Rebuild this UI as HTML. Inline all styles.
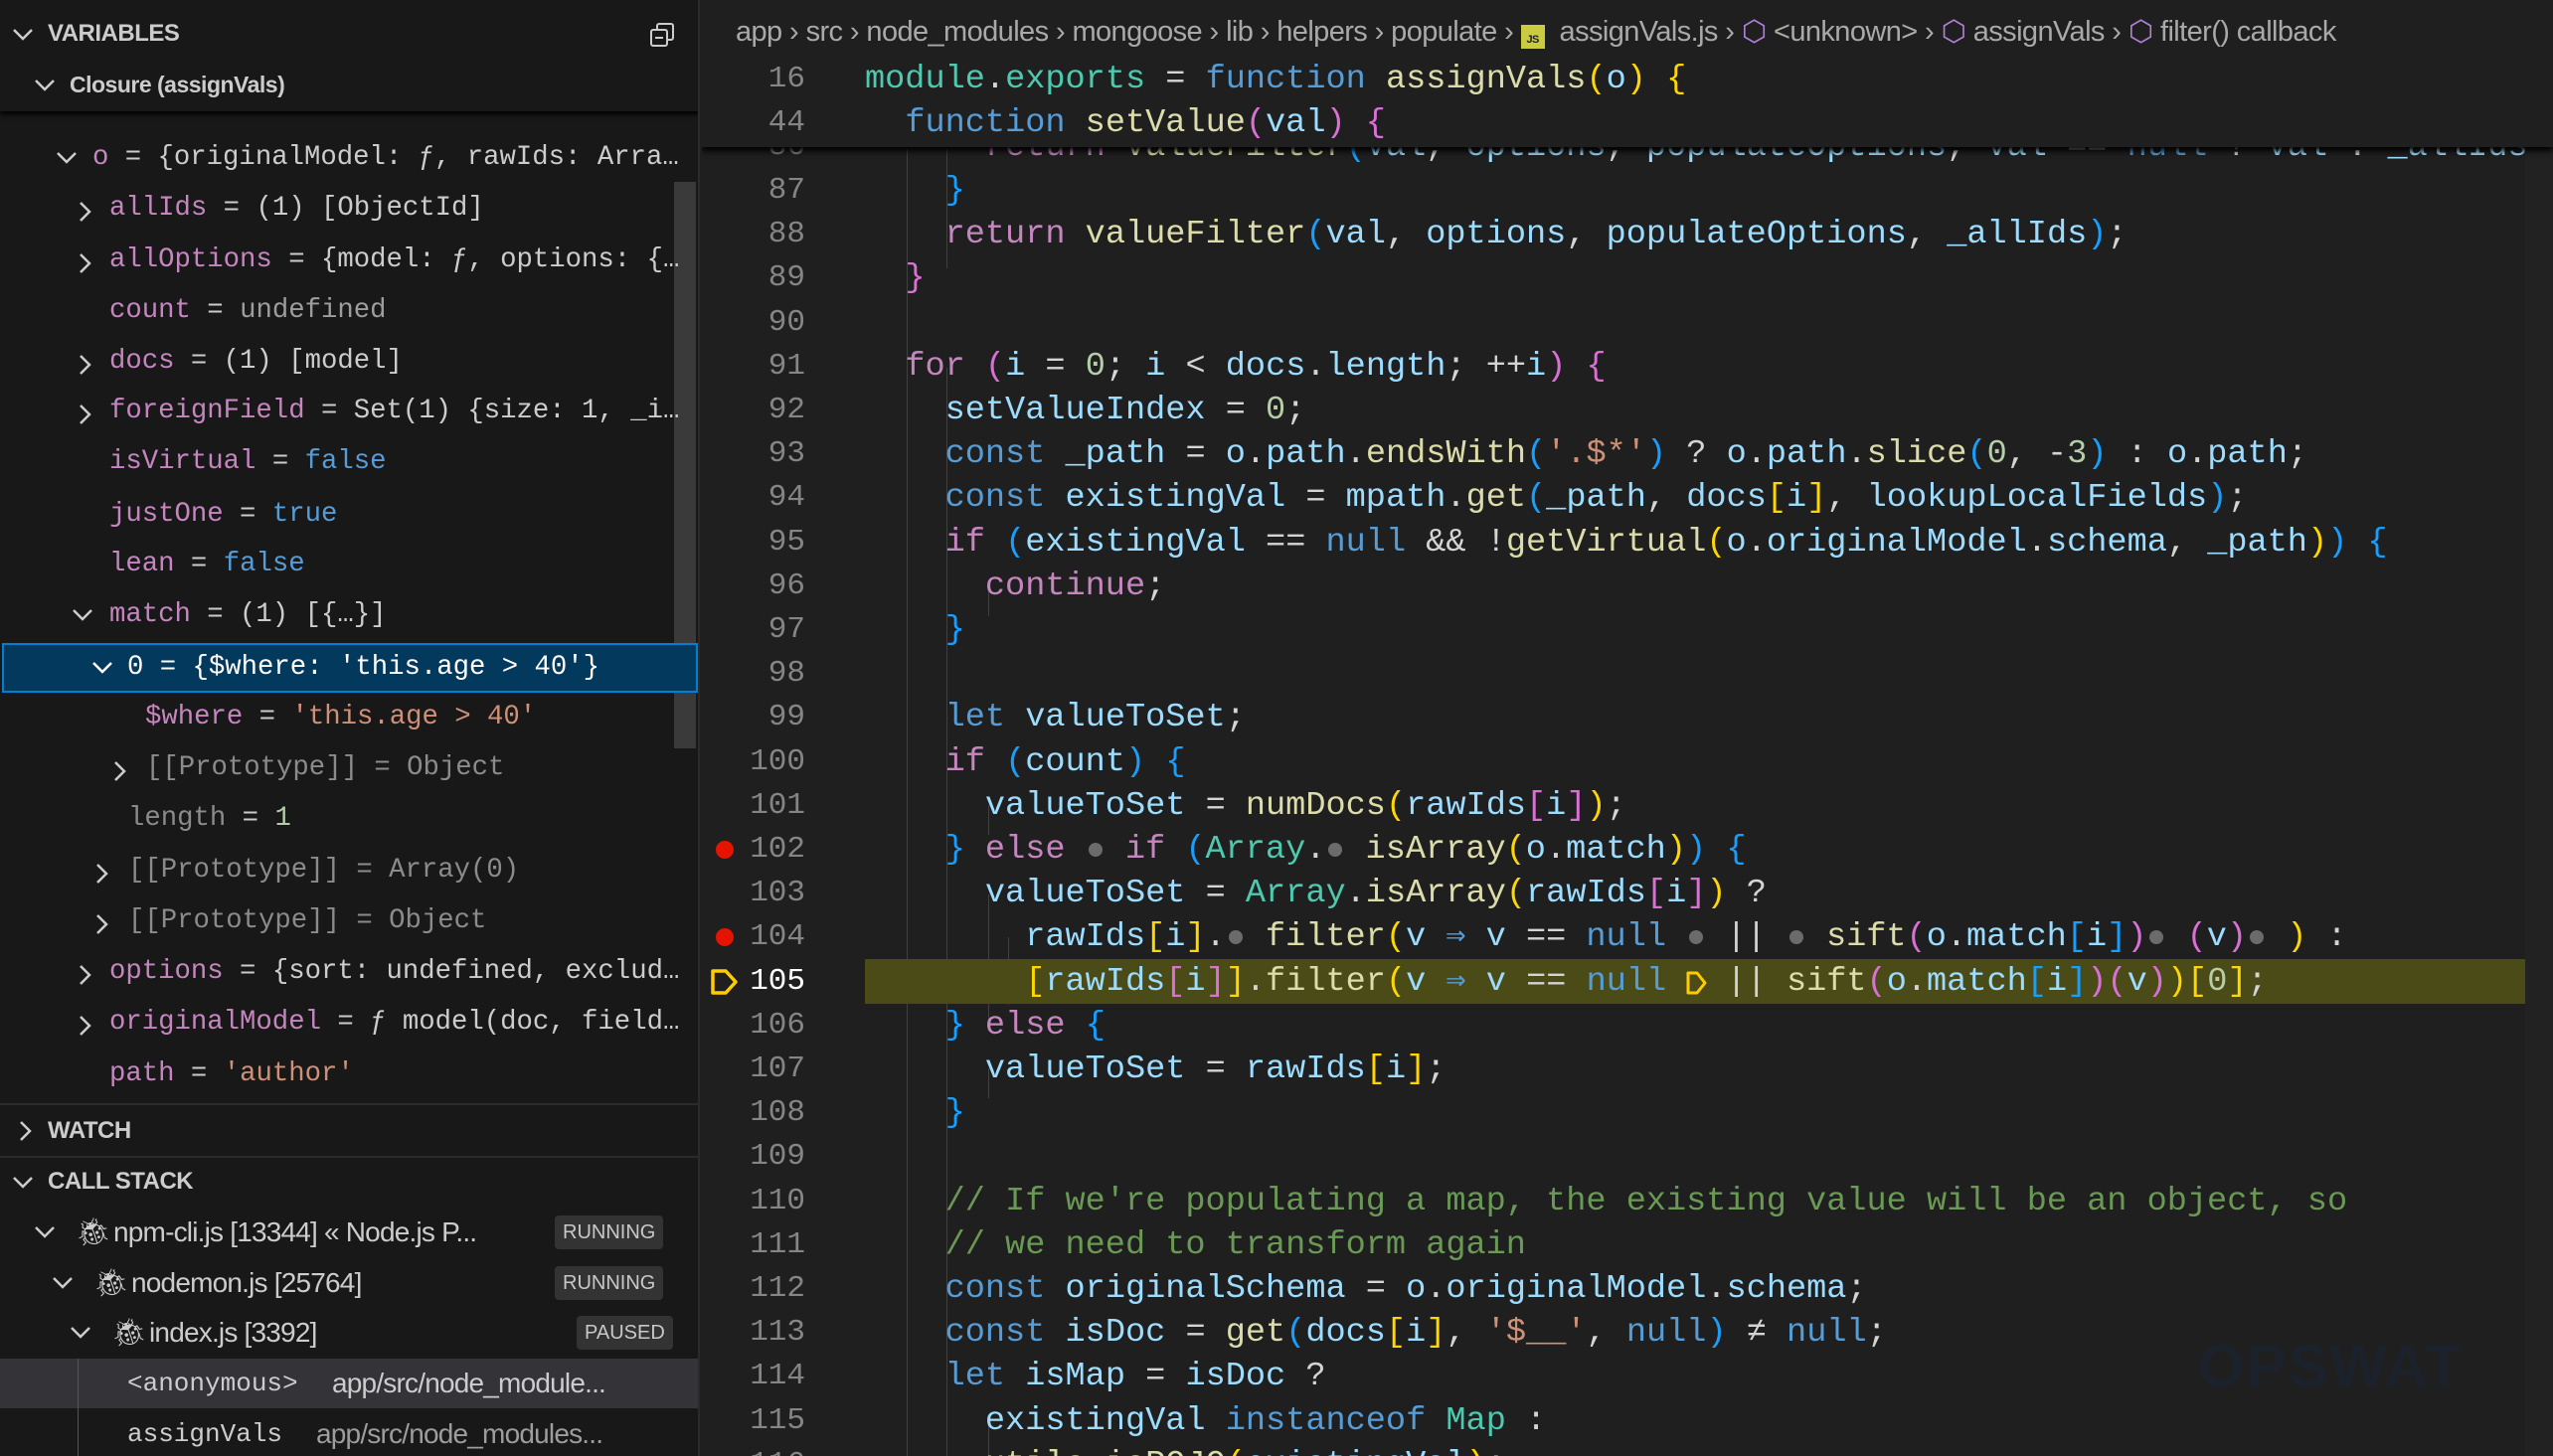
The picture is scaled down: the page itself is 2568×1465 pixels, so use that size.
<!DOCTYPE html>
<html><head><meta charset="utf-8"><style>
*{margin:0;padding:0;box-sizing:border-box}
body{width:2568px;height:1465px;overflow:hidden;background:#1f1f1f;position:relative;font-family:"Liberation Sans",sans-serif}
#left{position:absolute;left:0;top:0;width:704px;height:1465px;background:#181818;overflow:hidden;border-right:2px solid #2b2b2b}
.row{position:absolute;left:0;width:704px;height:50px;line-height:50px;font-family:"Liberation Mono",monospace;font-size:27.3px;color:#cccccc;white-space:pre}
.hdr{position:absolute;left:0;width:704px;height:50px;line-height:50px;font-size:24px;font-weight:bold;color:#cccccc;letter-spacing:-0.5px}
.nm{color:#c586c0}.dim{color:#8b8b8b}.str{color:#ce9178}.num{color:#b5cea8}.bl{color:#569cd6}.gr{color:#9d9d9d}
.chev{position:absolute;top:17px}
.sans{font-family:"Liberation Sans",sans-serif;font-size:28px}
.badge{position:absolute;height:34px;line-height:34px;background:#333;color:#c8c8c8;font-size:20px;border-radius:4px;padding:0 8px;font-family:"Liberation Sans",sans-serif;top:8px}
#ed{position:absolute;left:706px;top:0;width:1862px;height:1465px;background:#1f1f1f;overflow:hidden}
.ln{position:absolute;left:0;width:104px;text-align:right;font-family:"Liberation Mono",monospace;font-size:31px;color:#858585;height:44px;line-height:44px}
.cl{position:absolute;left:164px;font-family:"Liberation Mono",monospace;font-size:33.6px;color:#d4d4d4;white-space:pre;height:44px;line-height:44px}
.k{color:#569cd6}.c{color:#c586c0}.f{color:#dcdcaa}.v{color:#9cdcfe}.t{color:#4ec9b0}.s{color:#ce9178}.n{color:#b5cea8}.cm{color:#6a9955}
.b1{color:#ffd700}.b2{color:#da70d6}.b3{color:#179fff}
.dot{display:inline-block;width:20px;height:44px;position:relative;vertical-align:top}
.dot:after{content:"";position:absolute;left:3px;top:15px;width:14px;height:14px;border-radius:50%;background:#6b6b6b}
.bp{position:absolute;left:14px;width:18px;height:18px;border-radius:50%;background:#e51400}
.crumb{position:absolute;top:14px;left:34px;font-size:29px;color:#a9a9a9;white-space:pre;letter-spacing:-0.6px}
.g{position:absolute;width:1px;background:#404040}
</style></head><body>

<div id="ed">
  <div class="g" style="left:206px;top:150px;height:1315px"></div>
  <div class="g" style="left:246px;top:150px;height:120px"></div>
  <div class="g" style="left:246px;top:370px;height:1095px"></div>
  <div class="g" style="left:288px;top:590px;height:30px"></div>
  <div class="g" style="left:288px;top:810px;height:30px"></div>
  <div class="g" style="left:288px;top:900px;height:130px"></div>
  <div class="g" style="left:288px;top:1075px;height:30px"></div>
  <div class="g" style="left:288px;top:1430px;height:40px"></div>
  <div class="g" style="left:308px;top:943px;height:68px"></div>

  <div style="position:absolute;left:164px;top:965px;width:1670px;height:45px;background:#4b4b18"></div>

  <div class="ln" style="top:126px">86</div><div class="cl" style="top:126px">      <span class="c">return</span> <span class="f">valueFilter</span><span class="b3">(</span><span class="v">val</span>, <span class="v">options</span>, <span class="v">populateOptions</span>, <span class="v">val</span> == <span class="k">null</span> ? <span class="v">val</span> : <span class="v">_allIds</span></div>
  <div class="ln" style="top:170px">87</div><div class="cl" style="top:170px">    <span class="b3">}</span></div>
  <div class="ln" style="top:214px">88</div><div class="cl" style="top:214px">    <span class="c">return</span> <span class="f">valueFilter</span><span class="b3">(</span><span class="v">val</span>, <span class="v">options</span>, <span class="v">populateOptions</span>, <span class="v">_allIds</span><span class="b3">)</span>;</div>
  <div class="ln" style="top:258px">89</div><div class="cl" style="top:258px">  <span class="b2">}</span></div>
  <div class="ln" style="top:303px">90</div>
  <div class="ln" style="top:347px">91</div><div class="cl" style="top:347px">  <span class="c">for</span> <span class="b2">(</span><span class="v">i</span> = <span class="n">0</span>; <span class="v">i</span> &lt; <span class="v">docs</span>.<span class="v">length</span>; ++<span class="v">i</span><span class="b2">)</span> <span class="b2">{</span></div>
  <div class="ln" style="top:391px">92</div><div class="cl" style="top:391px">    <span class="v">setValueIndex</span> = <span class="n">0</span>;</div>
  <div class="ln" style="top:435px">93</div><div class="cl" style="top:435px">    <span class="k">const</span> <span class="v">_path</span> = <span class="v">o</span>.<span class="v">path</span>.<span class="f">endsWith</span><span class="b3">(</span><span class="s">'.$*'</span><span class="b3">)</span> ? <span class="v">o</span>.<span class="v">path</span>.<span class="f">slice</span><span class="b3">(</span><span class="n">0</span>, -<span class="n">3</span><span class="b3">)</span> : <span class="v">o</span>.<span class="v">path</span>;</div>
  <div class="ln" style="top:479px">94</div><div class="cl" style="top:479px">    <span class="k">const</span> <span class="v">existingVal</span> = <span class="v">mpath</span>.<span class="f">get</span><span class="b3">(</span><span class="v">_path</span>, <span class="v">docs</span><span class="b1">[</span><span class="v">i</span><span class="b1">]</span>, <span class="v">lookupLocalFields</span><span class="b3">)</span>;</div>
  <div class="ln" style="top:524px">95</div><div class="cl" style="top:524px">    <span class="c">if</span> <span class="b3">(</span><span class="v">existingVal</span> == <span class="k">null</span> &amp;&amp; !<span class="f">getVirtual</span><span class="b1">(</span><span class="v">o</span>.<span class="v">originalModel</span>.<span class="v">schema</span>, <span class="v">_path</span><span class="b1">)</span><span class="b3">)</span> <span class="b3">{</span></div>
  <div class="ln" style="top:568px">96</div><div class="cl" style="top:568px">      <span class="c">continue</span>;</div>
  <div class="ln" style="top:612px">97</div><div class="cl" style="top:612px">    <span class="b3">}</span></div>
  <div class="ln" style="top:656px">98</div>
  <div class="ln" style="top:700px">99</div><div class="cl" style="top:700px">    <span class="k">let</span> <span class="v">valueToSet</span>;</div>
  <div class="ln" style="top:745px">100</div><div class="cl" style="top:745px">    <span class="c">if</span> <span class="b3">(</span><span class="v">count</span><span class="b3">)</span> <span class="b3">{</span></div>
  <div class="ln" style="top:789px">101</div><div class="cl" style="top:789px">      <span class="v">valueToSet</span> = <span class="f">numDocs</span><span class="b1">(</span><span class="v">rawIds</span><span class="b2">[</span><span class="v">i</span><span class="b2">]</span><span class="b1">)</span>;</div>
  <div class="bp" style="top:846px"></div>
  <div class="ln" style="top:833px">102</div><div class="cl" style="top:833px">    <span class="b3">}</span> <span class="c">else</span> <span class="dot"></span> <span class="c">if</span> <span class="b3">(</span><span class="t">Array</span>.<span class="dot"></span> <span class="f">isArray</span><span class="b1">(</span><span class="v">o</span>.<span class="v">match</span><span class="b1">)</span><span class="b3">)</span> <span class="b3">{</span></div>
  <div class="ln" style="top:877px">103</div><div class="cl" style="top:877px">      <span class="v">valueToSet</span> = <span class="t">Array</span>.<span class="f">isArray</span><span class="b1">(</span><span class="v">rawIds</span><span class="b2">[</span><span class="v">i</span><span class="b2">]</span><span class="b1">)</span> ?</div>
  <div class="bp" style="top:934px"></div>
  <div class="ln" style="top:921px">104</div><div class="cl" style="top:921px">        <span class="v">rawIds</span><span class="b1">[</span><span class="v">i</span><span class="b1">]</span>.<span class="dot"></span> <span class="f">filter</span><span class="b1">(</span><span class="v">v</span> <span class="k">⇒</span> <span class="v">v</span> == <span class="k">null</span> <span class="dot"></span> || <span class="dot"></span> <span class="f">sift</span><span class="b2">(</span><span class="v">o</span>.<span class="v">match</span><span class="b3">[</span><span class="v">i</span><span class="b3">]</span><span class="b2">)</span><span class="dot"></span> <span class="b2">(</span><span class="v">v</span><span class="b2">)</span><span class="dot"></span> <span class="b1">)</span> :</div>
  <svg style="position:absolute;left:8px;top:973px" width="30" height="30" viewBox="0 0 30 30"><path d="M3 4 H16 L26 15 L16 26 H3 Z" fill="none" stroke="#ffcc00" stroke-width="3.5" stroke-linejoin="round"/></svg>
  <div class="ln" style="top:966px;color:#fff">105</div><div class="cl" style="top:966px">        <span class="b1">[</span><span class="v">rawIds</span><span class="b2">[</span><span class="v">i</span><span class="b2">]</span><span class="b1">]</span>.<span class="f">filter</span><span class="b1">(</span><span class="v">v</span> <span class="k">⇒</span> <span class="v">v</span> == <span class="k">null</span> <span style="display:inline-block;width:20px;height:44px;position:relative;vertical-align:top"><svg style="position:absolute;left:0;top:11px" width="22" height="24" viewBox="0 0 22 24"><path d="M2 2 H11 L19 12 L11 22 H2 Z" fill="none" stroke="#ffcc00" stroke-width="3" stroke-linejoin="round"/></svg></span> || <span class="f">sift</span><span class="b2">(</span><span class="v">o</span>.<span class="v">match</span><span class="b3">[</span><span class="v">i</span><span class="b3">]</span><span class="b2">)(</span><span class="v">v</span><span class="b2">)</span><span class="b1">)</span><span class="b1">[</span><span class="n">0</span><span class="b1">]</span>;</div>
  <div class="ln" style="top:1010px">106</div><div class="cl" style="top:1010px">    <span class="b3">}</span> <span class="c">else</span> <span class="b3">{</span></div>
  <div class="ln" style="top:1054px">107</div><div class="cl" style="top:1054px">      <span class="v">valueToSet</span> = <span class="v">rawIds</span><span class="b1">[</span><span class="v">i</span><span class="b1">]</span>;</div>
  <div class="ln" style="top:1098px">108</div><div class="cl" style="top:1098px">    <span class="b3">}</span></div>
  <div class="ln" style="top:1142px">109</div>
  <div class="ln" style="top:1187px">110</div><div class="cl cm" style="top:1187px">    // If we're populating a map, the existing value will be an object, so</div>
  <div class="ln" style="top:1231px">111</div><div class="cl cm" style="top:1231px">    // we need to transform again</div>
  <div class="ln" style="top:1275px">112</div><div class="cl" style="top:1275px">    <span class="k">const</span> <span class="v">originalSchema</span> = <span class="v">o</span>.<span class="v">originalModel</span>.<span class="v">schema</span>;</div>
  <div class="ln" style="top:1319px">113</div><div class="cl" style="top:1319px">    <span class="k">const</span> <span class="v">isDoc</span> = <span class="f">get</span><span class="b3">(</span><span class="v">docs</span><span class="b1">[</span><span class="v">i</span><span class="b1">]</span>, <span class="s">'$__'</span>, <span class="k">null</span><span class="b3">)</span> ≠ <span class="k">null</span>;</div>
  <div class="ln" style="top:1363px">114</div><div class="cl" style="top:1363px">    <span class="k">let</span> <span class="v">isMap</span> = <span class="v">isDoc</span> ?</div>
  <div class="ln" style="top:1408px">115</div><div class="cl" style="top:1408px">      <span class="v">existingVal</span> <span class="k">instanceof</span> <span class="t">Map</span> :</div>
  <div class="ln" style="top:1452px">116</div><div class="cl" style="top:1452px">      <span class="f">utils</span>.<span class="f">isPOJO</span><span class="b1">(</span><span class="v">existingVal</span><span class="b1">)</span>;</div>

  <div style="position:absolute;left:1505px;top:1340px;font-size:60px;font-weight:bold;color:#1c222b;letter-spacing:2px">OPSWAT</div>
  <div style="position:absolute;right:0;top:64px;width:28px;height:1401px;background:#222"></div>

  <div style="position:absolute;left:0;top:0;width:1862px;height:148px;background:#1f1f1f;box-shadow:0 4px 6px #000"></div>
  <div class="crumb">app <span>›</span> src <span>›</span> node_modules <span>›</span> mongoose <span>›</span> lib <span>›</span> helpers <span>›</span> populate <span>›</span> <span style="display:inline-block;width:24px;height:24px;background:#cbcb41;color:#1f1f1f;font-size:11px;font-weight:bold;line-height:30px;text-align:center;vertical-align:-2px">JS</span>  assignVals.js <span>›</span> <span style="color:#b180d7">⬡</span> &lt;unknown&gt; <span>›</span> <span style="color:#b180d7">⬡</span> assignVals <span>›</span> <span style="color:#b180d7">⬡</span> filter() callback</div>
  <div class="ln" style="top:58px">16</div><div class="cl" style="top:58px"><span class="t">module</span>.<span class="t">exports</span> = <span class="k">function</span> <span class="f">assignVals</span><span class="b1">(</span><span class="v">o</span><span class="b1">)</span> <span class="b1">{</span></div>
  <div class="ln" style="top:102px">44</div><div class="cl" style="top:102px">  <span class="k">function</span> <span class="f">setValue</span><span class="b2">(</span><span class="v">val</span><span class="b2">)</span> <span class="b2">{</span></div>
</div>

<div id="left">
  <div style="position:absolute;left:678px;top:183px;width:22px;height:570px;background:#3a3a3a"></div>
  <div class="row" style="top:75px;left:0"><span style="padding-left:110px" class="dim">i = 0</span></div>
  <div class="row" style="top:134px"><svg class="chev" style="left:56px" width="22" height="16"><polyline points="2,3 11,12 20,3" fill="none" stroke="#ccc" stroke-width="2.5"/></svg><span style="position:absolute;left:93px"><span class="nm">o</span> = {originalModel: ƒ, rawIds: Arra…</span></div>
  <div class="row" style="top:185px"><svg class="chev" style="left:78px" width="16" height="22"><polyline points="3,2 12,11 3,20" fill="none" stroke="#ccc" stroke-width="2.5"/></svg><span style="position:absolute;left:110px"><span class="nm">allIds</span> = (1) [ObjectId]</span></div>
  <div class="row" style="top:237px"><svg class="chev" style="left:78px" width="16" height="22"><polyline points="3,2 12,11 3,20" fill="none" stroke="#ccc" stroke-width="2.5"/></svg><span style="position:absolute;left:110px"><span class="nm">allOptions</span> = {model: ƒ, options: {…</span></div>
  <div class="row" style="top:288px"><span style="position:absolute;left:110px"><span class="nm">count</span> = <span class="gr">undefined</span></span></div>
  <div class="row" style="top:339px"><svg class="chev" style="left:78px" width="16" height="22"><polyline points="3,2 12,11 3,20" fill="none" stroke="#ccc" stroke-width="2.5"/></svg><span style="position:absolute;left:110px"><span class="nm">docs</span> = (1) [model]</span></div>
  <div class="row" style="top:389px"><svg class="chev" style="left:78px" width="16" height="22"><polyline points="3,2 12,11 3,20" fill="none" stroke="#ccc" stroke-width="2.5"/></svg><span style="position:absolute;left:110px"><span class="nm">foreignField</span> = Set(1) {size: 1, _i…</span></div>
  <div class="row" style="top:440px"><span style="position:absolute;left:110px"><span class="nm">isVirtual</span> = <span class="bl">false</span></span></div>
  <div class="row" style="top:493px"><span style="position:absolute;left:110px"><span class="nm">justOne</span> = <span class="bl">true</span></span></div>
  <div class="row" style="top:543px"><span style="position:absolute;left:110px"><span class="nm">lean</span> = <span class="bl">false</span></span></div>
  <div class="row" style="top:594px"><svg class="chev" style="left:72px" width="22" height="16"><polyline points="2,3 11,12 20,3" fill="none" stroke="#ccc" stroke-width="2.5"/></svg><span style="position:absolute;left:110px"><span class="nm">match</span> = (1) [{…}]</span></div>
  <div class="row" style="top:647px;left:2px;width:700px;background:#04395e;border:2px solid #007fd4"><svg class="chev" style="left:88px;top:15px" width="22" height="16"><polyline points="2,3 11,12 20,3" fill="none" stroke="#fff" stroke-width="2.5"/></svg><span style="position:absolute;left:124px;line-height:46px;color:#fff">0 = {$where: 'this.age &gt; 40'}</span></div>
  <div class="row" style="top:697px"><span style="position:absolute;left:146px"><span class="nm">$where</span> = <span class="str">'this.age &gt; 40'</span></span></div>
  <div class="row" style="top:748px"><svg class="chev" style="left:113px" width="16" height="22"><polyline points="3,2 12,11 3,20" fill="none" stroke="#ccc" stroke-width="2.5"/></svg><span style="position:absolute;left:147px" class="dim">[[Prototype]] = Object</span></div>
  <div class="row" style="top:799px"><span style="position:absolute;left:129px"><span class="dim">length</span> = <span class="num">1</span></span></div>
  <div class="row" style="top:851px"><svg class="chev" style="left:95px" width="16" height="22"><polyline points="3,2 12,11 3,20" fill="none" stroke="#ccc" stroke-width="2.5"/></svg><span style="position:absolute;left:129px" class="dim">[[Prototype]] = Array(0)</span></div>
  <div class="row" style="top:902px"><svg class="chev" style="left:95px" width="16" height="22"><polyline points="3,2 12,11 3,20" fill="none" stroke="#ccc" stroke-width="2.5"/></svg><span style="position:absolute;left:129px" class="dim">[[Prototype]] = Object</span></div>
  <div class="row" style="top:953px"><svg class="chev" style="left:78px" width="16" height="22"><polyline points="3,2 12,11 3,20" fill="none" stroke="#ccc" stroke-width="2.5"/></svg><span style="position:absolute;left:110px"><span class="nm">options</span> = {sort: undefined, exclud…</span></div>
  <div class="row" style="top:1004px"><svg class="chev" style="left:78px" width="16" height="22"><polyline points="3,2 12,11 3,20" fill="none" stroke="#ccc" stroke-width="2.5"/></svg><span style="position:absolute;left:110px"><span class="nm">originalModel</span> = ƒ model(doc, field…</span></div>
  <div class="row" style="top:1056px"><span style="position:absolute;left:110px"><span class="nm">path</span> = <span class="str">'author'</span></span></div>

  <div style="position:absolute;left:0;top:0;width:704px;height:112px;background:#181818;box-shadow:0 3px 5px #000"></div>
  <div class="hdr" style="top:9px"><svg class="chev" style="left:12px;top:18px" width="22" height="16"><polyline points="2,3 11,12 20,3" fill="none" stroke="#ccc" stroke-width="2.5"/></svg><span style="position:absolute;left:48px">VARIABLES</span>
    <svg style="position:absolute;left:652px;top:12px" width="28" height="28" viewBox="0 0 28 28"><rect x="9" y="3" width="16" height="16" rx="2" fill="none" stroke="#ccc" stroke-width="2"/><rect x="3" y="9" width="16" height="16" rx="2" fill="#181818" stroke="#ccc" stroke-width="2"/><line x1="7" y1="17" x2="15" y2="17" stroke="#ccc" stroke-width="2"/></svg></div>
  <div class="hdr" style="top:60px;font-size:23px"><svg class="chev" style="left:34px;top:18px" width="22" height="16"><polyline points="2,3 11,12 20,3" fill="none" stroke="#ccc" stroke-width="2.5"/></svg><span style="position:absolute;left:70px">Closure (assignVals)</span></div>

  <div style="position:absolute;left:0;top:1110px;width:704px;height:2px;background:#2b2b2b"></div>
  <div class="hdr" style="top:1113px"><svg class="chev" style="left:18px;top:14px" width="16" height="22"><polyline points="3,2 12,11 3,20" fill="none" stroke="#ccc" stroke-width="2.5"/></svg><span style="position:absolute;left:48px">WATCH</span></div>
  <div style="position:absolute;left:0;top:1163px;width:704px;height:2px;background:#2b2b2b"></div>
  <div class="hdr" style="top:1164px"><svg class="chev" style="left:12px;top:18px" width="22" height="16"><polyline points="2,3 11,12 20,3" fill="none" stroke="#ccc" stroke-width="2.5"/></svg><span style="position:absolute;left:48px">CALL STACK</span></div>

  <div class="row sans" style="top:1215px"><svg class="chev" style="left:34px" width="22" height="16"><polyline points="2,3 11,12 20,3" fill="none" stroke="#ccc" stroke-width="2.5"/></svg><span style="position:absolute;left:76px;color:#ccc">🐞︎</span><span style="position:absolute;left:114px;letter-spacing:-0.8px">npm-cli.js [13344] « Node.js P...</span><span class="badge" style="left:558px">RUNNING</span></div>
  <div class="row sans" style="top:1266px"><svg class="chev" style="left:52px" width="22" height="16"><polyline points="2,3 11,12 20,3" fill="none" stroke="#ccc" stroke-width="2.5"/></svg><span style="position:absolute;left:94px;color:#ccc">🐞︎</span><span style="position:absolute;left:132px;letter-spacing:-0.8px">nodemon.js [25764]</span><span class="badge" style="left:558px">RUNNING</span></div>
  <div class="row sans" style="top:1316px"><svg class="chev" style="left:70px" width="22" height="16"><polyline points="2,3 11,12 20,3" fill="none" stroke="#ccc" stroke-width="2.5"/></svg><span style="position:absolute;left:112px;color:#ccc">🐞︎</span><span style="position:absolute;left:150px;letter-spacing:-0.8px">index.js [3392]</span><span class="badge" style="left:580px">PAUSED</span></div>
  <div class="row" style="top:1367px;background:#333338"><div style="position:absolute;left:78px;top:0;width:1px;height:100px;background:#555"></div><span style="position:absolute;left:128px;font-size:26px">&lt;anonymous&gt;</span><span class="sans" style="position:absolute;left:334px;letter-spacing:-0.8px">app/src/node_module...</span></div>
  <div class="row" style="top:1418px"><span style="position:absolute;left:128px;font-size:26px">assignVals</span><span class="sans" style="position:absolute;left:318px;letter-spacing:-0.8px;color:#9d9d9d">app/src/node_modules...</span></div>
</div>
</body></html>
